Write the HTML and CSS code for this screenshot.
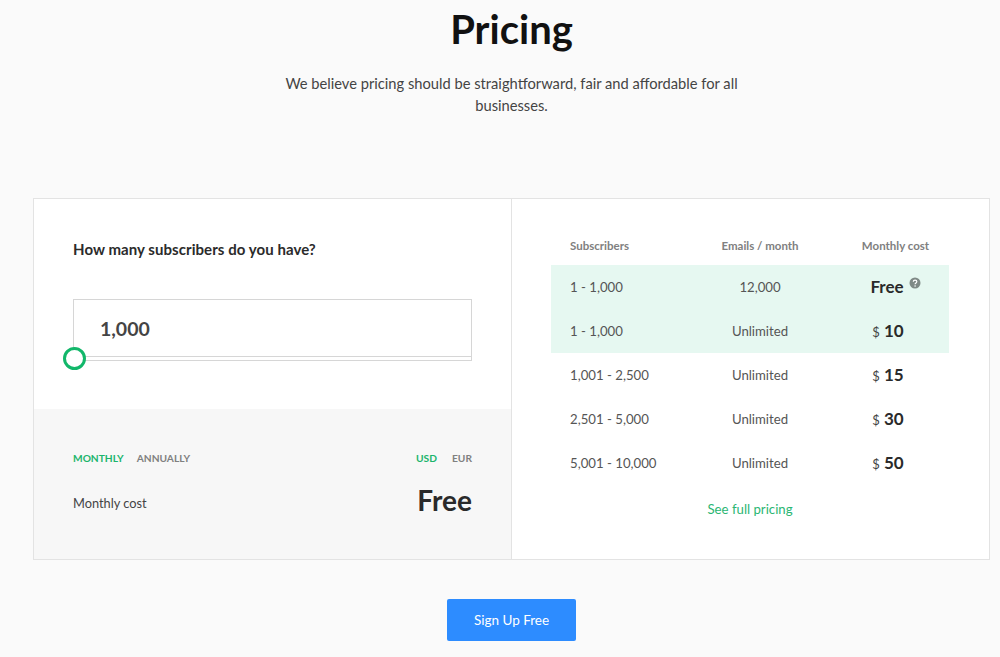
FILE: index.html
```html
<!DOCTYPE html>
<html lang="en">
<head>
    <meta charset="UTF-8">
    <meta name="viewport" content="width=device-width, initial-scale=1.0">
    <title>Pricing</title>
    <link rel="stylesheet" href="styles.css">
</head>
<body>
    <div class="container">
        <div class="header">
            <h2>Pricing</h2>
            <p>We believe pricing should be straightforward, fair and affordable for all businesses.</p>
        </div>
        <div class="card">
            <div class="calc">
                <div class="calc-top">
                    <div class="question">How many subscribers do you have?</div>
                    <div class="slider-box">
                        <div class="slider-value">1,000</div>
                        <div class="slider-handle"></div>
                    </div>
                </div>
                <div class="calc-bottom">
                    <div class="toggles">
                        <div class="toggle-group">
                            <span class="active">MONTHLY</span>
                            <span>ANNUALLY</span>
                        </div>
                        <div class="toggle-group currency">
                            <span class="active">USD</span>
                            <span>EUR</span>
                        </div>
                    </div>
                    <div class="cost-row">
                        <span class="cost-label">Monthly cost</span>
                        <span class="cost-value">Free</span>
                    </div>
                </div>
            </div>
            <div class="plans">
                <table>
                    <tr>
                        <th class="col-subs">Subscribers</th>
                        <th>Emails / month</th>
                        <th>Monthly cost</th>
                    </tr>
                    <tr class="current">
                        <td class="col-subs">1 - 1,000</td>
                        <td>12,000</td>
                        <td class="price price-free">Free<svg class="help" viewBox="0 0 12 12" width="12" height="12"><circle cx="6" cy="6" r="5.5" fill="#7f8a86"/><path d="M4.300 4.700c0-1 .8-1.600 1.800-1.600s1.700.6 1.700 1.500c0 1.300-1.700 1.300-1.700 2.600" fill="none" stroke="#fff" stroke-width="1.200"/><circle cx="6.100" cy="9" r=".8" fill="#fff"/></svg></td>
                    </tr>
                    <tr class="current">
                        <td class="col-subs">1 - 1,000</td>
                        <td>Unlimited</td>
                        <td class="price"><small>$</small> 10</td>
                    </tr>
                    <tr>
                        <td class="col-subs">1,001 - 2,500</td>
                        <td>Unlimited</td>
                        <td class="price"><small>$</small> 15</td>
                    </tr>
                    <tr>
                        <td class="col-subs">2,501 - 5,000</td>
                        <td>Unlimited</td>
                        <td class="price"><small>$</small> 30</td>
                    </tr>
                    <tr>
                        <td class="col-subs">5,001 - 10,000</td>
                        <td>Unlimited</td>
                        <td class="price"><small>$</small> 50</td>
                    </tr>
                </table>
                <a class="full-link" href="#">See full pricing</a>
            </div>
        </div>
        <div class="actions">
            <a class="signup" href="#">Sign Up Free</a>
        </div>
    </div>
</body>
</html>
```

FILE: styles.css
```css
body {
    font-family: 'Lato', sans-serif;
    background-color: #fafafa;
    color: #222;
    margin: 0;
    padding: 0;
    height: 657px;
    overflow: hidden;
}
.container {
    padding: 0 10px 0 33px;
}
.header {
    text-align: center;
    height: 198px;
}
.header h2 {
    font-size: 40px;
    line-height: 48px;
    font-weight: 700;
    color: #111;
    margin: 0;
    padding-top: 5px;
}
.header p {
    width: 480px;
    margin: 19px auto 0;
    font-size: 14.700px;
    line-height: 22px;
    color: #444;
}
.card {
    display: flex;
    height: 362px;
    box-sizing: border-box;
    border: 1px solid #e3e3e3;
    background-color: #fff;
}
.calc {
    width: 477px;
    display: flex;
    flex-direction: column;
    border-right: 1px solid #e3e3e3;
}
.calc-top {
    height: 210px;
    box-sizing: border-box;
    padding: 41px 39px 0;
}
.question {
    font-size: 15px;
    line-height: 18px;
    font-weight: 700;
    letter-spacing: .06px;
    color: #2b2b2b;
}
.slider-box {
    position: relative;
    margin-top: 41px;
    height: 62px;
    box-sizing: border-box;
    border: 1px solid #d6d6d6;
    box-shadow: inset 0 -3px 0 #fff, inset 0 -4px 0 #d6d6d6;
    padding: 0 26px;
}
.slider-value {
    font-size: 19.500px;
    font-weight: 700;
    line-height: 57px;
    color: #444;
}
.slider-handle {
    position: absolute;
    left: -11px;
    top: 47px;
    width: 23px;
    height: 23px;
    box-sizing: border-box;
    border: 3px solid #12b76a;
    border-radius: 50%;
    background-color: #fff;
}
.calc-bottom {
    flex: 1;
    background-color: #f7f7f7;
    padding: 37px 39px 0;
}
.toggles,
.cost-row {
    display: flex;
    justify-content: space-between;
}
.toggle-group span {
    font-size: 10.200px;
    line-height: 14px;
    font-weight: 700;
    color: #808080;
    margin-left: 9px;
    display: inline-block;
}
.toggle-group span:first-child {
    margin-left: 0;
}
.toggle-group .active {
    color: #1cb56c;
}
.currency span {
    margin-left: 11px;
}
.cost-row {
    align-items: center;
    margin-top: 19px;
}
.cost-label {
    font-size: 12.800px;
    color: #444;
    padding-top: 5px;
}
.cost-value {
    font-size: 28px;
    line-height: 32px;
    font-weight: 700;
    color: #2a2a2a;
}
.plans {
    flex: 1;
    padding: 25px 40px 0 39px;
}
table {
    width: 100%;
    border-collapse: collapse;
    table-layout: fixed;
}
th, td {
    padding: 0;
    text-align: center;
    box-sizing: border-box;
}
th {
    height: 41px;
    padding-top: 2px;
    font-size: 11.500px;
    font-weight: 700;
    color: #808080;
}
td {
    height: 44px;
    font-size: 13.200px;
    color: #555;
}
th:first-child { width: 127px; }
th:nth-child(2) { width: 164px; }
.col-subs {
    text-align: left;
    padding-left: 19px;
}
.current td {
    background-color: #e6f8f1;
}
td.price {
    font-size: 17px;
    font-weight: 700;
    color: #2a2a2a;
    padding: 0 15px 2px 0;
}
.price small {
    font-size: 13px;
    font-weight: 400;
    color: #444;
}
td.price-free {
    padding-right: 0;
}
.help {
    margin-left: 5px;
    vertical-align: 4px;
}
.full-link {
    display: block;
    text-align: center;
    margin-top: 15px;
    font-size: 13.200px;
    line-height: 18px;
    color: #2bb673;
    text-decoration: none;
}
.actions {
    text-align: center;
    margin-top: 39px;
}
.signup {
    display: inline-block;
    width: 129px;
    height: 42px;
    line-height: 42px;
    background-color: #2d8cff;
    border-radius: 2px;
    color: #fff;
    font-size: 13.500px;
    text-decoration: none;
}
```
